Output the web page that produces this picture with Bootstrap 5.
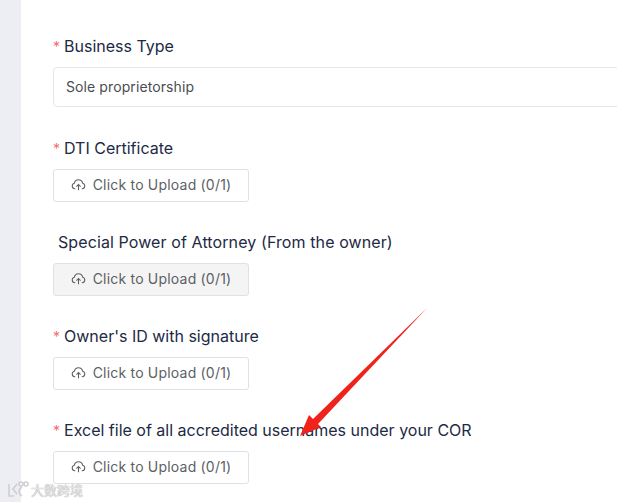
<!DOCTYPE html>
<html lang="en">
<head>
<meta charset="utf-8">
<title>Form</title>
<link rel="stylesheet" href="https://cdn.jsdelivr.net/npm/bootstrap@5.3.0/dist/css/bootstrap.min.css">
<style>
html,body{height:502px;overflow:hidden;background:#fff}
body{font-family:"Inter","Noto Sans",sans-serif;color:#606266}
.rail{width:21px;background:#eceef3;flex:none}
.sheet{padding:35px 0 0 32px;flex:1;min-width:0;overflow:hidden}
.field-row{height:94px}
.field-row.first{height:102px}
.field-lbl{font-size:16px;height:22px;line-height:22px;color:#1c2a44;margin-bottom:10px;white-space:nowrap;display:flex;align-items:baseline}
.field-lbl.plain{padding-left:5px;letter-spacing:.1px}
.req{color:#f56c6c;margin-right:4px;font-size:14px;line-height:1}
.fake-input{width:600px;height:40px;border:1px solid #e4e6ea;border-radius:4px;padding:0 12px;font-size:14px;line-height:38px;color:#4a4d52;letter-spacing:.1px}
.up-btn{width:196px;height:33px;border:1px solid #dfe1e5;border-radius:3px;background:#fff;color:#5c5f64;font-size:14px;letter-spacing:.2px;display:flex;align-items:center;justify-content:center;gap:7px;padding:0 0 2px}
.up-btn.hov{background:#f4f4f5}
.up-btn svg{width:15px;height:15px}
.arrow{position:absolute;left:295px;top:305px;width:135px;height:135px}
.wm{position:absolute;left:7px;top:480px;display:flex;align-items:center;gap:2px;color:#e4e4e4;font:13px "Noto Sans CJK SC",sans-serif;text-shadow:0 0 1px #888}
</style>
</head>
<body>
<div class="d-flex position-relative" style="height:502px">
  <div class="rail"></div>
  <div class="sheet">
    <div class="field-row first">
      <div class="field-lbl"><span class="req">*</span>Business Type</div>
      <div class="fake-input">Sole proprietorship</div>
    </div>
    <div class="field-row">
      <div class="field-lbl"><span class="req">*</span>DTI Certificate</div>
      <button class="up-btn" type="button"><svg viewBox="0 0 16 16" fill="none" stroke="#5c5f64" stroke-width="1.1"><path d="M4.5 12.5H4a3 3 0 0 1-.4-5.900A4.500 4.500 0 0 1 12.400 6.600 3 3 0 0 1 12 12.500h-.5"/><path d="M8 14V8M5.800 10.200 8 8l2.200 2.200"/></svg>Click to Upload (0/1)</button>
    </div>
    <div class="field-row">
      <div class="field-lbl plain">Special Power of Attorney (From the owner)</div>
      <button class="up-btn hov" type="button"><svg viewBox="0 0 16 16" fill="none" stroke="#5c5f64" stroke-width="1.1"><path d="M4.5 12.5H4a3 3 0 0 1-.4-5.900A4.500 4.500 0 0 1 12.400 6.600 3 3 0 0 1 12 12.500h-.5"/><path d="M8 14V8M5.800 10.200 8 8l2.200 2.200"/></svg>Click to Upload (0/1)</button>
    </div>
    <div class="field-row">
      <div class="field-lbl"><span class="req">*</span>Owner's ID with signature</div>
      <button class="up-btn" type="button"><svg viewBox="0 0 16 16" fill="none" stroke="#5c5f64" stroke-width="1.1"><path d="M4.5 12.5H4a3 3 0 0 1-.4-5.900A4.500 4.500 0 0 1 12.400 6.600 3 3 0 0 1 12 12.500h-.5"/><path d="M8 14V8M5.800 10.200 8 8l2.200 2.200"/></svg>Click to Upload (0/1)</button>
    </div>
    <div class="field-row">
      <div class="field-lbl"><span class="req">*</span>Excel file of all accredited usernames under your COR</div>
      <button class="up-btn" type="button"><svg viewBox="0 0 16 16" fill="none" stroke="#5c5f64" stroke-width="1.1"><path d="M4.5 12.5H4a3 3 0 0 1-.4-5.900A4.500 4.500 0 0 1 12.400 6.600 3 3 0 0 1 12 12.500h-.5"/><path d="M8 14V8M5.800 10.200 8 8l2.200 2.200"/></svg>Click to Upload (0/1)</button>
    </div>
  </div>
  <svg class="arrow" viewBox="0 0 135 135"><path d="M132 3 L23 119 L26 122 L5 131 L14 110 L18 114 Z" fill="#f0231c"/></svg>
  <div class="wm"><svg width="22" height="18" viewBox="0 0 22 18" fill="none" stroke="#cfcfcf" stroke-width="1.600"><path d="M2 3v12h5M10 3 6 8l4 5M15 6a5 5 0 0 0 0 9"/><circle cx="14" cy="3" r="2"/><circle cx="19" cy="3" r="2"/></svg><span>大数跨境</span></div>
</div>
</body>
</html>
